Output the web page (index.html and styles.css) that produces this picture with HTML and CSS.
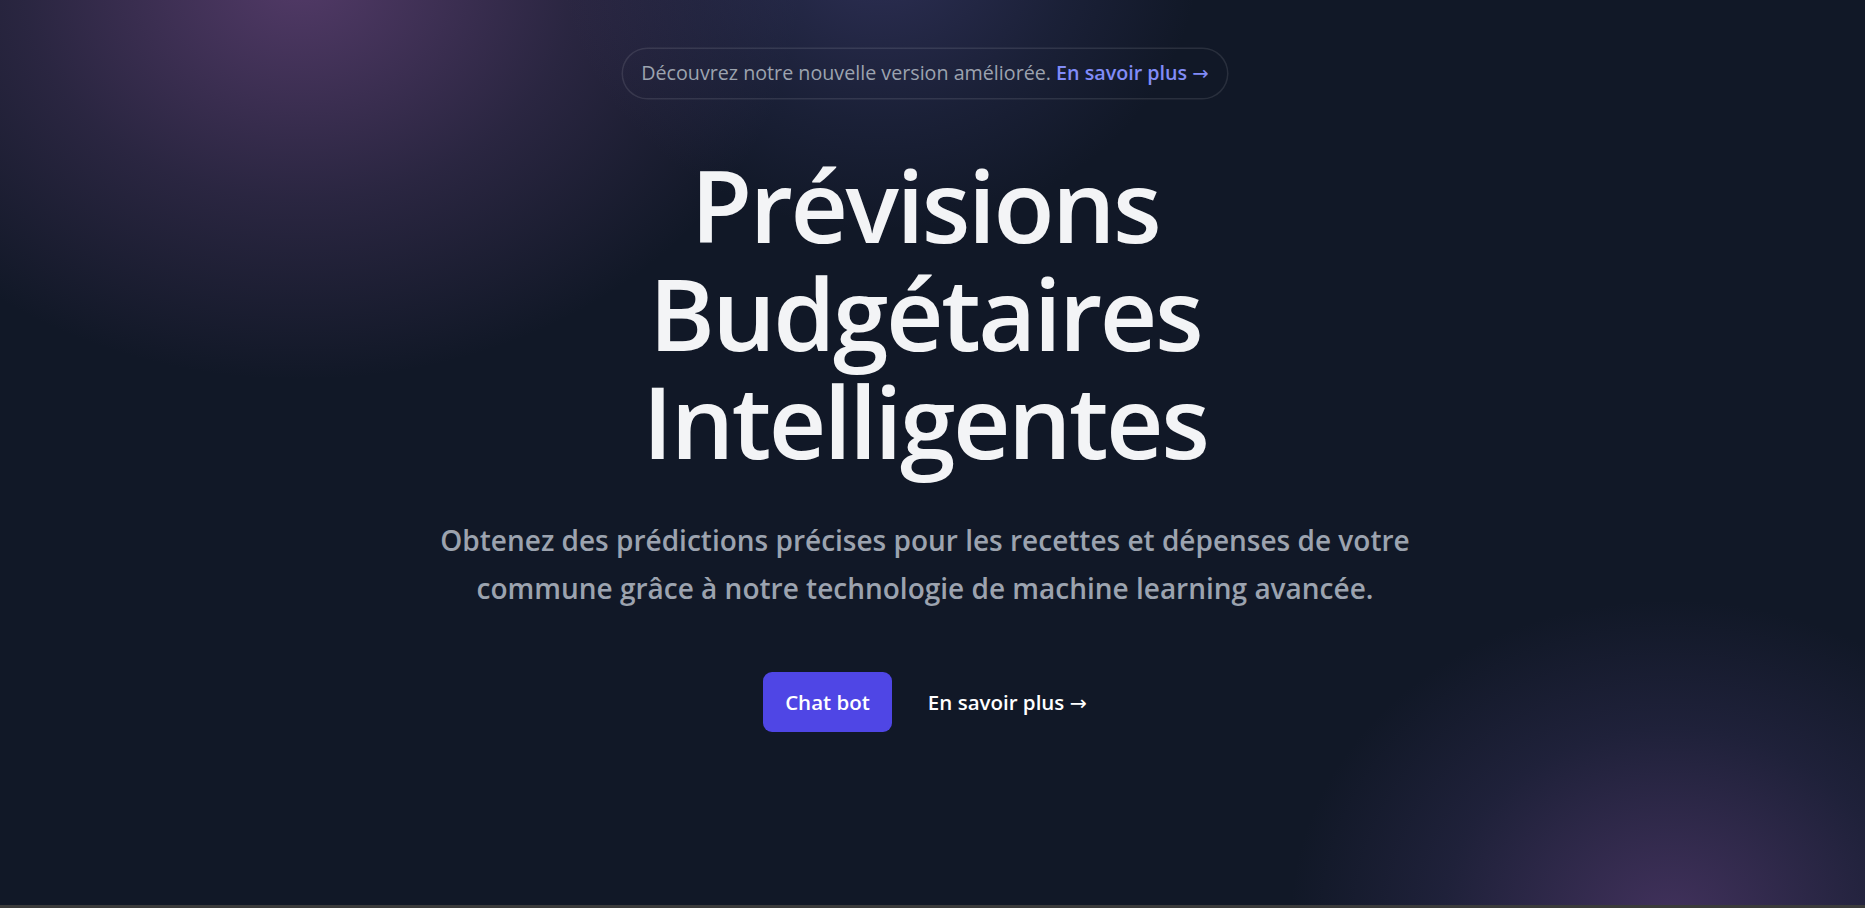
FILE: index.html
```html
<!DOCTYPE html>
<html lang="fr">
<head>
<meta charset="utf-8">
<title>Prévisions Budgétaires Intelligentes</title>
<link rel="stylesheet" href="styles.css">
</head>
<body>
<div class="page">
  <div class="glow glow-tl"></div>
  <div class="glow glow-tc"></div>
  <div class="glow glow-br"></div>
  <main class="hero">
    <div class="badge">Découvrez notre nouvelle version améliorée. <a class="badge-link" href="#">En savoir plus <span class="arrow">→</span></a></div>
    <h1 class="title">Prévisions Budgétaires Intelligentes</h1>
    <p class="lead">Obtenez des prédictions précises pour les recettes et dépenses de votre commune grâce à notre technologie de machine learning avancée.</p>
    <div class="actions">
      <a class="btn-primary" href="#">Chat bot</a>
      <a class="btn-link" href="#">En savoir plus <span class="arrow">→</span></a>
    </div>
  </main>
  <div class="bottom-bar"></div>
</div>
</body>
</html>
```

FILE: styles.css
```css
* { box-sizing: border-box; }
html, body {
  margin: 0;
  padding: 0;
  height: 100%;
}
body {
  background: #111827;
  font-family: "Open Sans", "Noto Sans", "Liberation Sans", sans-serif;
  overflow: hidden;
}
.page {
  position: relative;
  width: 100%;
  height: 908px;
  overflow: hidden;
  display: flex;
  flex-direction: column;
}
.glow {
  position: absolute;
  border-radius: 50%;
  pointer-events: none;
}
.glow-tl {
  left: -200px;
  top: -420px;
  width: 1000px;
  height: 800px;
  background: radial-gradient(closest-side, rgba(125, 80, 145, 0.6), rgba(110, 75, 135, 0.27) 55%, rgba(17, 24, 39, 0) 100%);
}
.glow-tc {
  left: 560px;
  top: -330px;
  width: 640px;
  height: 560px;
  background: radial-gradient(closest-side, rgba(80, 75, 140, 0.45), rgba(70, 70, 130, 0.18) 60%, rgba(17, 24, 39, 0) 100%);
}
.glow-br {
  left: 1290px;
  top: 600px;
  width: 760px;
  height: 640px;
  background: radial-gradient(closest-side, rgba(105, 70, 135, 0.55), rgba(80, 65, 125, 0.22) 60%, rgba(17, 24, 39, 0) 100%);
}
.hero {
  position: relative;
  flex: 1;
  display: flex;
  flex-direction: column;
  align-items: center;
  padding: 49px 15px 0 0;
  text-align: center;
}
.badge {
  padding: 6px 18px;
  border-radius: 999px;
  box-shadow: 0 0 0 1.5px rgba(255, 255, 255, 0.1);
  font-size: 19.7px;
  line-height: 36px;
  color: #9ca3af;
  white-space: nowrap;
}
.badge-link {
  color: #818cf8;
  font-weight: 600;
  text-decoration: none;
}
.arrow {
  font-family: "DejaVu Sans", sans-serif;
  font-weight: 400;
}
.title {
  margin: 52px 0 0;
  font-size: 100px;
  line-height: 108px;
  font-weight: 600;
  letter-spacing: -0.025em;
  color: #f3f4f6;
  width: 700px;
}
.lead {
  margin: 42px 0 0;
  width: 1010px;
  font-size: 28px;
  line-height: 48px;
  font-weight: 600;
  color: #9ca3af;
}
.actions {
  margin-top: 60px;
  display: flex;
  align-items: center;
  gap: 36px;
}
.btn-primary {
  display: block;
  padding: 15px 22px;
  border-radius: 9px;
  background: #4f46e5;
  color: #ffffff;
  font-size: 20.5px;
  line-height: 30px;
  font-weight: 600;
  text-decoration: none;
}
.btn-link {
  color: #ffffff;
  font-size: 20.5px;
  line-height: 30px;
  font-weight: 600;
  text-decoration: none;
}
.bottom-bar {
  position: relative;
  height: 3px;
  background: #3b3b3b;
}
```
